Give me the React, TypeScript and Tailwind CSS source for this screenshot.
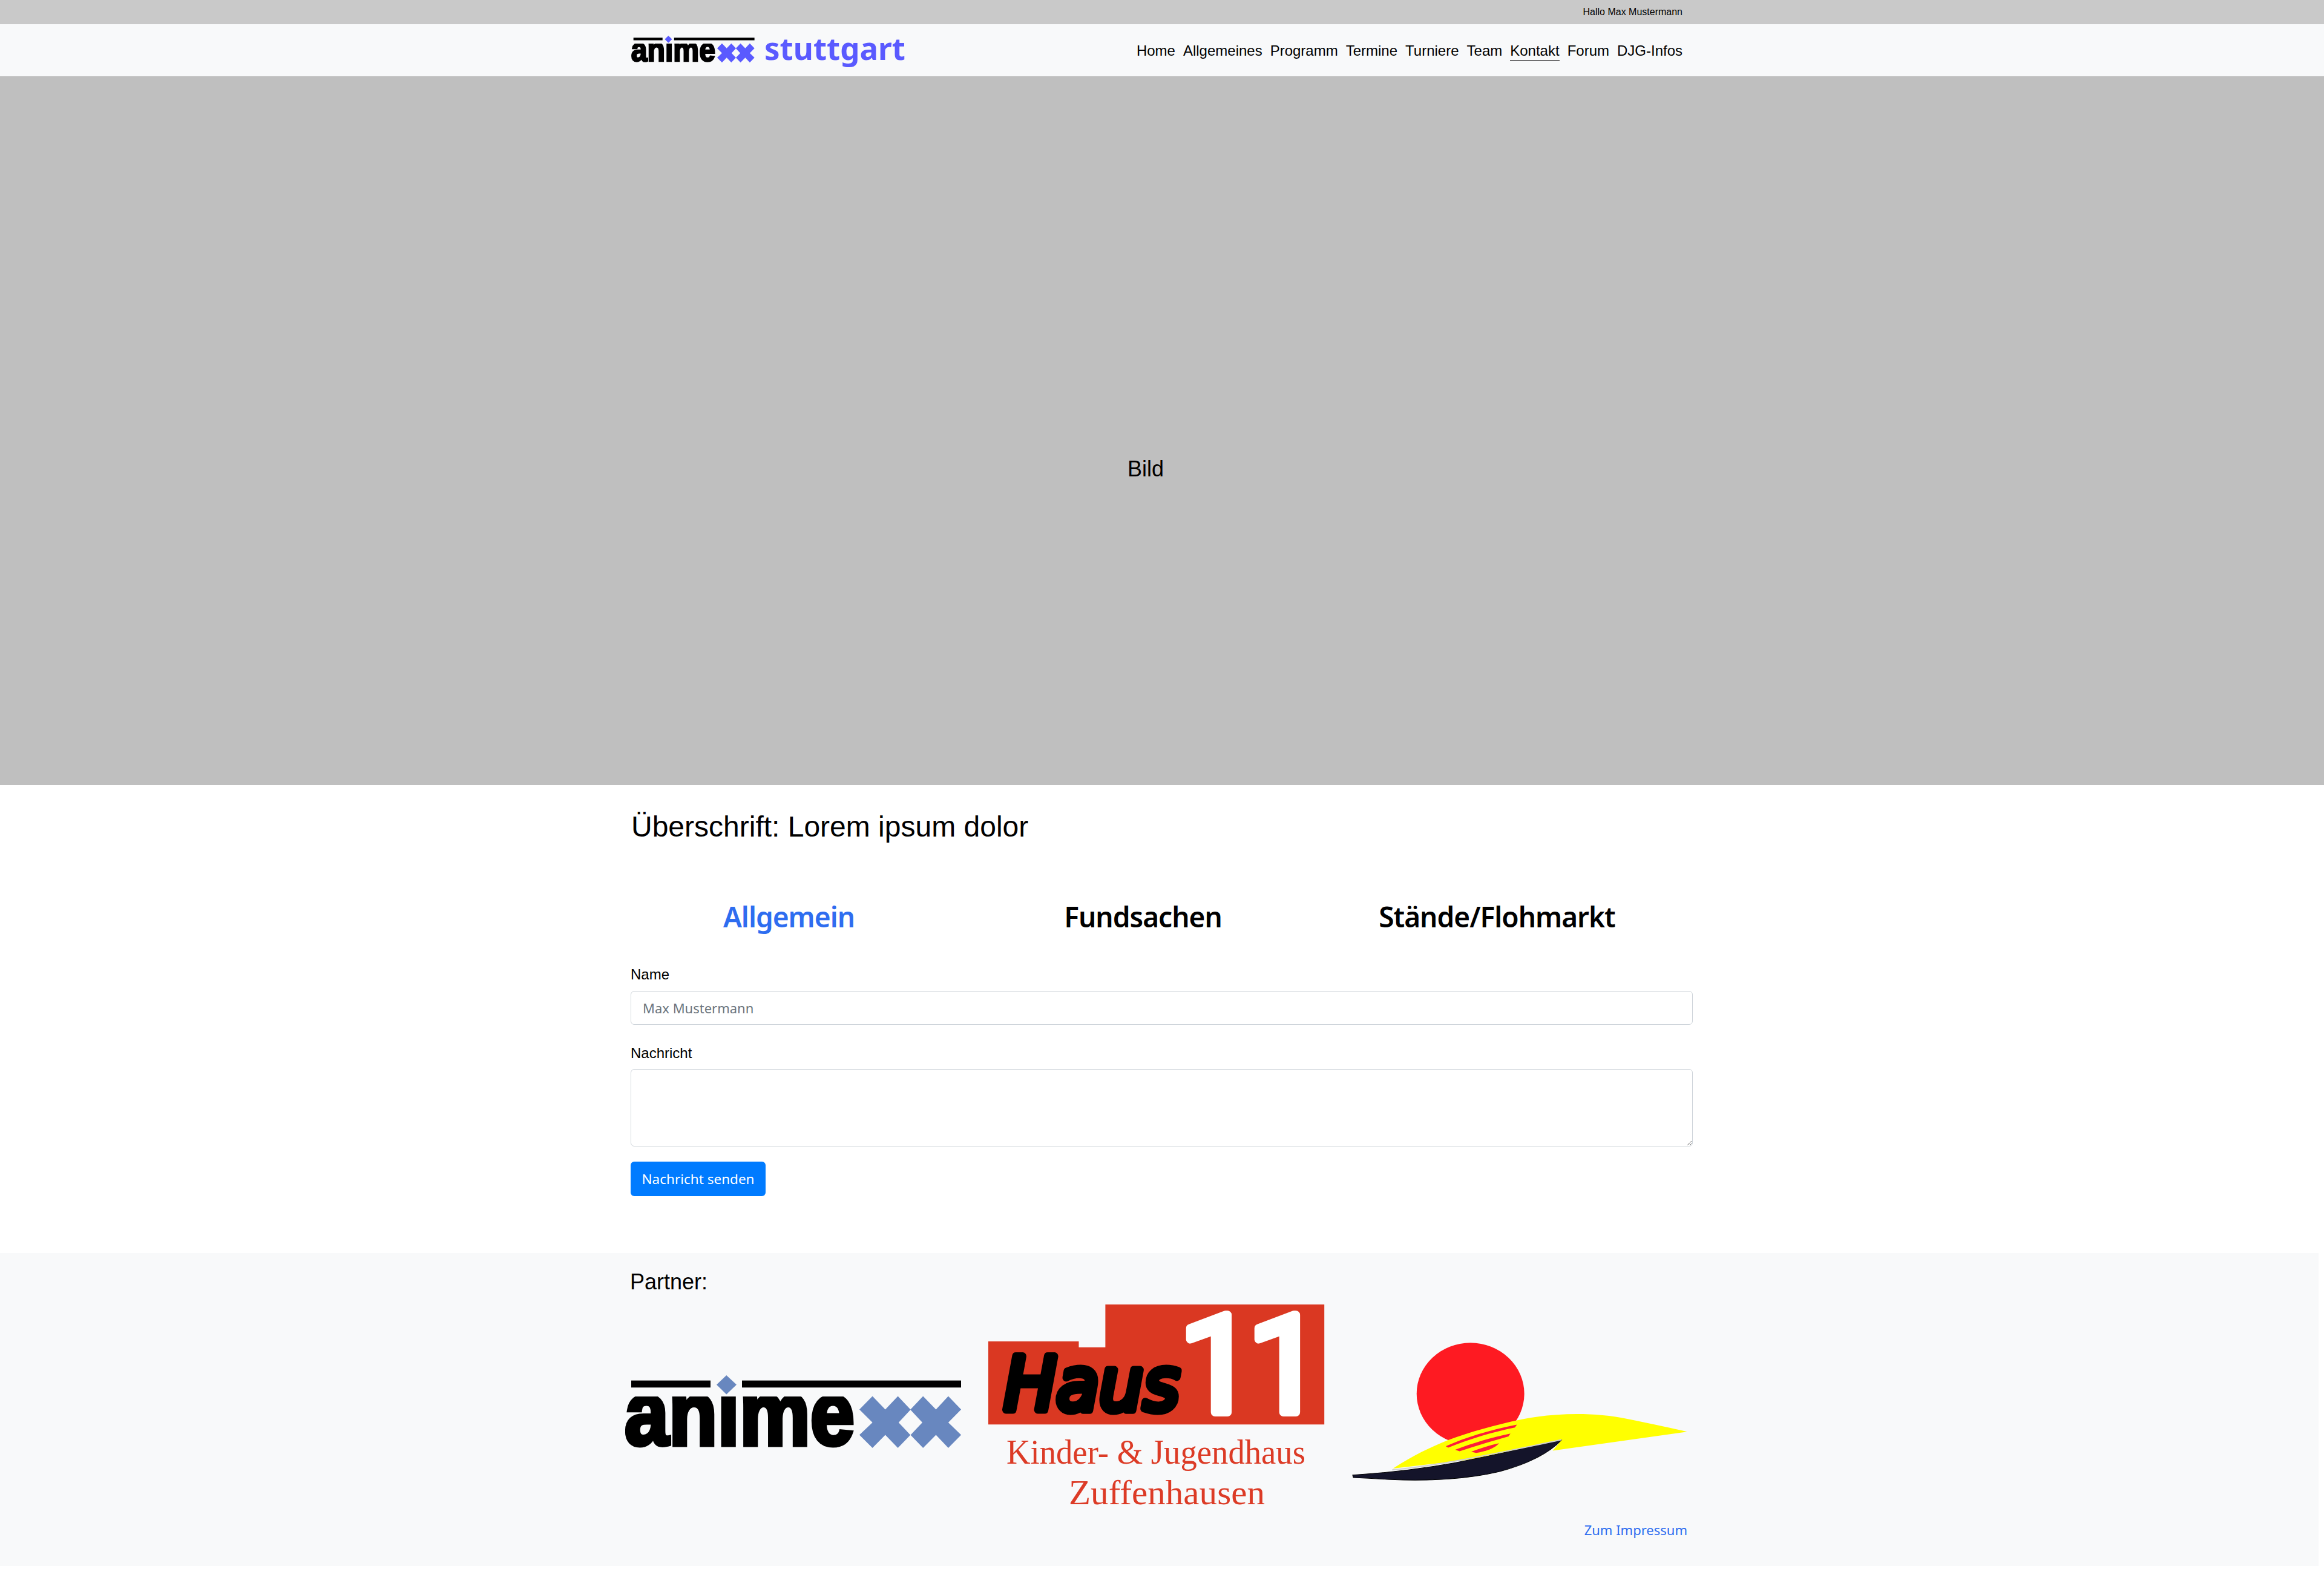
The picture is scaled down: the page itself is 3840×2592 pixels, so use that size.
const NAV_ITEMS = ["Home", "Allgemeines", "Programm", "Termine", "Turniere", "Team", "Kontakt", "Forum", "DJG-Infos"];
const TABS = ["Allgemein", "Fundsachen", "Stände/Flohmarkt"];

function AnimexxLogo({ accent, className }: { accent: string; className: string }) {
  const clipId = `anime-clip-${accent.slice(1)}`;
  return (
    <svg viewBox="0 0 556 122" className={className}>
      <defs>
        <clipPath id={clipId}>
          <rect x="-5" y="35" width="400" height="90" />
        </clipPath>
      </defs>
      <rect x="10" y="8.6" width="131" height="11.6" fill="#000" />
      <rect x="193" y="8.6" width="362" height="11.6" fill="#000" />
      <polygon points="167.3,0 184,15.6 167.3,31.5 151,15.6" fill={accent} />
      <g clipPath={`url(#${clipId})`}>
        <text x="-1" y="115" fontFamily="'Liberation Sans', sans-serif" fontWeight="700" fontSize="150" textLength="380" lengthAdjust="spacingAndGlyphs" stroke="#000" strokeWidth="7" fill="#000">anime</text>
      </g>
      <path
        fillRule="evenodd"
        fill={accent}
        d="M387 56.4 408.6 34.6 429.8 56.4 450.6 34.6 471.4 56.4 492.2 34.6 513.5 56.4 533.9 34.6 555.1 56.4 533.9 77.9 555.1 98.6 533.9 120 513.5 98.6 492.2 120 471.4 98.6 450.6 120 429.8 98.6 408.6 120 387 98.6 408.6 77.9Z M471.4 57.1 451.8 77.9 471.4 98.7 491 77.9Z"
      />
    </svg>
  );
}

function Haus11Logo() {
  return (
    <svg viewBox="0 0 556 345" className="w-[556px] h-[345px] shrink-0">
      <polygon points="0,61 149.5,61 149.5,70.7 193.4,70.7 193.4,0 555.2,0 555.2,198.3 0,198.3" fill="#da3822" />
      <text x="26" y="174" fontFamily="'DejaVu Sans', sans-serif" fontStyle="italic" fontSize="122" textLength="290" lengthAdjust="spacingAndGlyphs" fill="#000" stroke="#000" strokeWidth="13" strokeLinejoin="round" strokeLinecap="round">Haus</text>
      <text x="315 428" y="178" fontFamily="Roboto, sans-serif" fontSize="225" fill="#fff" stroke="#fff" strokeWidth="14" strokeLinejoin="round" strokeLinecap="round">11</text>
      <text x="30" y="263" fontFamily="'Liberation Serif', serif" fontSize="56" textLength="494" lengthAdjust="spacingAndGlyphs" fill="#dc3b26">Kinder- &amp; Jugendhaus</text>
      <text x="133" y="330" fontFamily="'Liberation Serif', serif" fontSize="56" textLength="324" lengthAdjust="spacingAndGlyphs" fill="#dc3b26">Zuffenhausen</text>
    </svg>
  );
}

function SunLogo() {
  return (
    <svg viewBox="80 130 1370 710" preserveAspectRatio="none" className="w-[559px] h-[237px] shrink-0 mt-[10px]">
      <ellipse cx="562" cy="395" rx="218" ry="252" fill="#fe1a22" />
      <path d="M248 765C330 700 400 660 470 625 560 585 660 550 770 522 900 490 1060 485 1200 520 1300 545 1380 565 1440 583L895 677 930 625 600 715Z" fill="#ffff00" />
      <path d="M750 548C640 575 540 612 462 655L472 662C560 618 650 585 742 562Z" fill="#fe1a3a" />
      <path d="M724 592C650 610 570 640 500 672L518 680C590 650 660 625 716 606Z" fill="#fe1a3a" />
      <path d="M678 640C640 650 600 665 565 682L585 688C625 680 660 665 678 640Z" fill="#fe1a3a" />
      <path d="M85 797C250 785 420 760 600 712 720 680 830 650 930 625 880 690 790 745 680 780 560 815 400 830 240 820 180 815 130 812 88 810Z" fill="#14142a" stroke="#000" strokeWidth="3" />
      <path d="M245 772C420 752 600 708 930 623" fill="none" stroke="#cfcfcf" strokeWidth="6" />
    </svg>
  );
}

export default function App() {
  return (
    <div className="min-h-[2592px] w-[3840px] bg-white text-black font-['Liberation_Sans',Arial,sans-serif]">
      {/* Top bar */}
      <div className="h-[40px] bg-[#c9c9c9] flex items-center justify-end pr-[1060px] text-[16px]">
        Hallo Max Mustermann
      </div>

      {/* Nav */}
      <nav className="h-[86px] bg-[#f8f9fa] flex items-center justify-between pl-[1043px] pr-[1060px]">
        <div className="flex items-center gap-[16px]">
          <AnimexxLogo accent="#5a5aff" className="w-[204px] h-[45px] mt-[-4px]" />
          <span className="text-[51px] leading-none font-bold text-[#5a5aff] font-['Noto_Sans',sans-serif] mt-[-8px]">stuttgart</span>
        </div>
        <div className="flex items-center gap-[13px] text-[24px]">
          {NAV_ITEMS.map((item) => (
            <a key={item} className={`leading-[30px] pt-[2px] ${item === "Kontakt" ? "border-b-[1.5px] border-black" : "border-b-[1.5px] border-transparent"}`}>
              {item}
            </a>
          ))}
        </div>
      </nav>

      {/* Hero placeholder */}
      <div className="h-[1171px] bg-[#bfbfbf] flex items-center justify-center pt-[126px] pr-[54px] text-[36px]">
        Bild
      </div>

      {/* Contact */}
      <main className="pl-[1042px] w-[2797px]">
        <h1 className="mt-[33px] text-[48px] leading-[72px] pl-[1px]">Überschrift: Lorem ipsum dolor</h1>

        <div className="mt-[76px] ml-[-31px] w-[1755px] grid grid-cols-3 text-center text-[46px] tracking-[-1px] leading-[72px] font-semibold font-['Noto_Sans',sans-serif]">
          {TABS.map((tab, i) => (
            <a key={tab} className={i === 0 ? "text-[#2e6df0]" : "text-black"}>{tab}</a>
          ))}
        </div>

        <form>
          <label className="block mt-[42px] text-[24px] leading-[36px]">Name</label>
          <input
            placeholder="Max Mustermann"
            className="block mt-[9px] w-full h-[56px] px-[19px] bg-white border-[1.5px] border-[#ced4da] rounded-[6px] text-[22px] font-['Noto_Sans',sans-serif] placeholder:text-[#6c757d]"
          />
          <label className="block mt-[29px] text-[24px] leading-[36px]">Nachricht</label>
          <textarea className="block mt-[8px] w-full h-[128px] px-[19px] py-[9px] bg-white border-[1.5px] border-[#ced4da] rounded-[6px]" />
          <button type="button" className="block mt-[25px] w-[223px] h-[57px] pt-[1px] bg-[#007bff] text-white rounded-[6px] text-[22.5px] font-['Noto_Sans',sans-serif]">
            Nachricht senden
          </button>
        </form>
      </main>

      {/* Partner footer */}
      <footer className="mt-[94px] w-[3831px] h-[517px] bg-[#f8f9fa] pt-[21px] pl-[1033px] pr-[1043px]">
        <h2 className="pl-[8px] text-[36px] leading-[54px]">Partner:</h2>
        <div className="mt-[10px] h-[345px] flex items-center gap-[44px]">
          <AnimexxLogo accent="#6887bf" className="w-[556px] h-[122px] shrink-0 mt-[10px]" />
          <Haus11Logo />
          <SunLogo />
        </div>
        <div className="mt-[9px] text-right text-[22px] leading-[36px] text-[#2e6df0] font-['Noto_Sans',sans-serif]">
          <a>Zum Impressum</a>
        </div>
      </footer>
    </div>
  );
}
